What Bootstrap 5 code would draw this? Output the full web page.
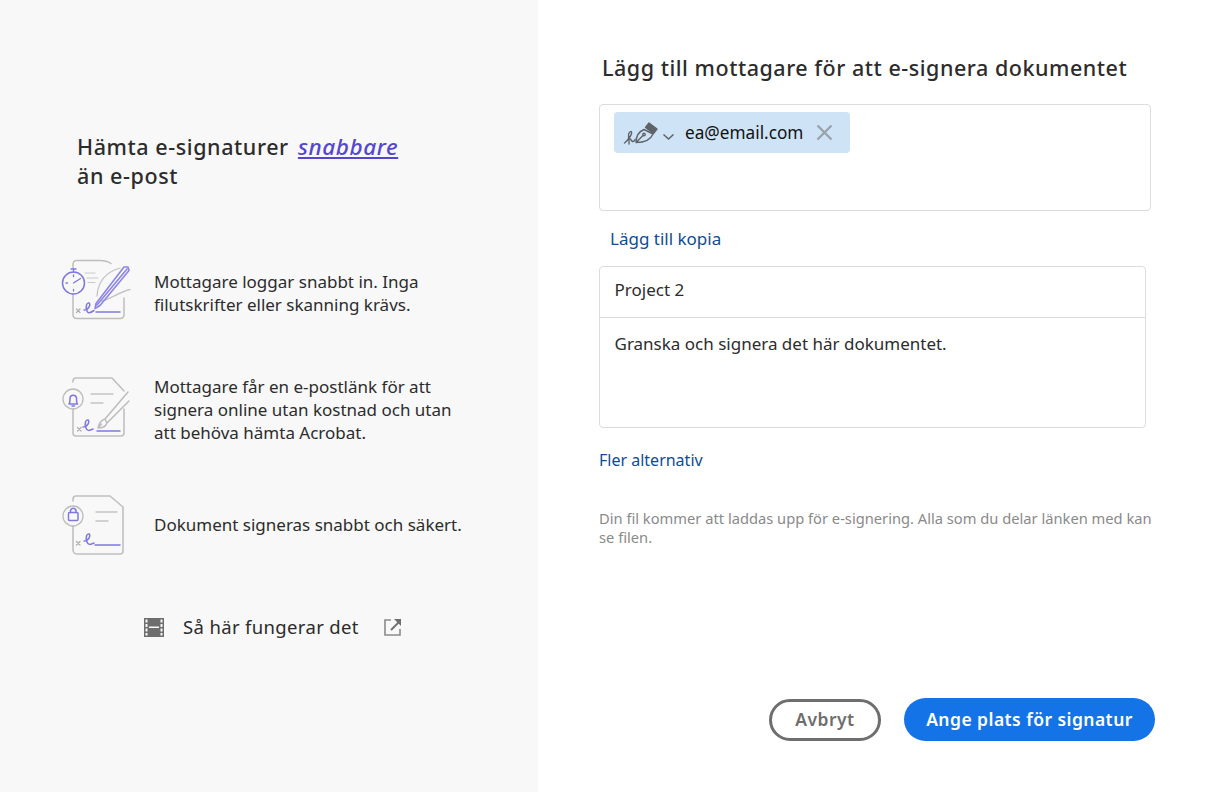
<!DOCTYPE html>
<html lang="sv">
<head>
<meta charset="utf-8">
<title>Lägg till mottagare</title>
<link href="https://cdn.jsdelivr.net/npm/bootstrap@5.3.0/dist/css/bootstrap.min.css" rel="stylesheet">
<style>
html,body{height:100%;}
body{font-family:"Noto Sans","Open Sans",sans-serif;color:#2c2c2c;background:#fff;overflow:hidden;}
.shell{height:792px;}
.side{width:538px;flex:none;background:#f8f8f8;padding:132px 0 0 0;}
.side-title{margin:0 0 0 77px;font-size:21.5px;line-height:29px;font-weight:500;letter-spacing:.58px;height:59px;}
.side-title em{color:#5546cf;text-decoration:underline;margin-left:3px;font-weight:500;font-size:22.5px;}
.feat{display:flex;align-items:center;margin-left:56px;}
.feat svg{flex:none;width:80px;height:72px;margin-right:18px;}
.feat p{margin:0;font-size:17px;line-height:23px;width:340px;color:#2c2c2c;}
.f1{margin-top:66px;}
.f2{margin-top:44px;}
.f3{margin-top:43px;}
.how{margin:53px 0 0 144px;font-size:18.5px;line-height:28px;letter-spacing:.35px;color:#2c2c2c;}
.how-ic{width:20px;height:19px;margin-right:19px;}
.how-ext{width:18px;height:18px;margin-left:25px;}
.main{flex:1;padding:53px 0 0 61px;position:relative;}
.main-title{font-size:21.5px;line-height:30px;font-weight:500;letter-spacing:.53px;margin:0 0 21px 3px;color:#2c2c2c;}
.rcpt{width:552px;height:107px;border:1px solid #dcdcdc;border-radius:4px;padding:7px 14px;}
.chip{width:236px;height:41px;background:#cfe3f6;border-radius:4px;padding:0 17px 0 9px;font-size:17.2px;color:#111;}
.chip-ic{width:40px;height:26px;flex:none;}
.chip-car{width:11px;height:6px;margin:8px 11px 0 0;flex:none;}
.chip-x{width:17px;height:17px;margin-left:auto;flex:none;}
.lnk{color:#0f4c93;text-decoration:none;line-height:24px;display:block;}
.add-cc{margin:16px 0 15px 11px;font-size:17px;}
.msg{width:547px;height:162px;border:1px solid #dcdcdc;border-radius:4px;font-size:17px;color:#2c2c2c;}
.msg-a{height:51px;padding:0 14.5px;line-height:46px;border-bottom:1px solid #dcdcdc;}
.msg-b{padding:14px 14.5px;line-height:24px;}
.more{margin:20px 0 0 0;font-size:16px;}
.note{width:556px;margin:37px 0 0 0;font-size:14.7px;line-height:19px;color:#8a8a8a;}
.acts{position:absolute;left:231px;top:698px;gap:23px;align-items:center;}
.pill{border-radius:22px;font-weight:600;font-size:17.5px;line-height:1;display:flex;align-items:center;justify-content:center;letter-spacing:.45px;padding:1px 0 0;}
.pill-o{width:112px;height:42px;border:3px solid #6e6e6e;color:#6e6e6e;background:#fff;}
.pill-p{width:251px;height:43px;border:0;background:#1473e6;color:#fff;}
.pill-o:hover{background:#fff;color:#6e6e6e;border-color:#6e6e6e;}
.pill-p:hover{background:#1473e6;color:#fff;}
</style>
</head>
<body>
<div class="d-flex shell">
  <aside class="side">
    <h1 class="side-title">Hämta e-signaturer <em>snabbare</em><br>än e-post</h1>

    <div class="feat f1">
      <svg viewBox="0 0 80 72" fill="none" stroke-linecap="round" stroke-linejoin="round">
        <path d="M17 11V7a3.500 3.500 0 0 1 3.500-3.500H44c4 0 8 1 11 3M17 37v21a3.500 3.500 0 0 0 3.500 3.500h44a3.500 3.500 0 0 0 3.500-3.500V41" stroke="#bdbdbd" stroke-width="1.500"/>
        <path d="M29 16h10M31 21h11M32 25.500h7" stroke="#c9c9c9" stroke-width="1.200"/>
        <path d="M41 39c1-14 9-24 23-28M45 44c8-1 18-9 29-11.500" stroke="#c4c4c4" stroke-width="1.300"/>
        <circle cx="17.500" cy="26" r="11" stroke="#7f78e0" stroke-width="1.500"/>
        <path d="M17.500 15v-2.500M15 12h5M17.500 26l7-4.500M17.500 18v1.500M17.500 32.500V34M10 26h1.500" stroke="#7f78e0" stroke-width="1.300"/>
        <path d="M39 51.500l1-5L68 10l4 0 1 3.500-29 35zM71 12L41 48" stroke="#8d86e6" stroke-width="1.600"/>
        <path d="M20.500 52l3.500 3.500m0-3.500l-3.500 3.500" stroke="#adadad" stroke-width="1.200"/>
        <path d="M28 53c5 0 7-6 5-7-2-.5-4 3-2 8 1 3 3 2 7-.5M40 55h24" stroke="#7f78e0" stroke-width="1.500"/>
      </svg>
      <p>Mottagare loggar snabbt in. Inga<br>filutskrifter eller skanning krävs.</p>
    </div>

    <div class="feat f2">
      <svg viewBox="0 0 80 72" fill="none" stroke-linecap="round" stroke-linejoin="round">
        <path d="M17 9V8a3 3 0 0 1 3-3h36l12 13M68 36v24a3 3 0 0 1-3 3H20a3 3 0 0 1-3-3V36" stroke="#c0c0c0" stroke-width="1.600"/>
        <circle cx="17" cy="26" r="10" stroke="#bcbcbc" stroke-width="1.300"/>
        <path d="M13 31c1-1 1-2 1-5.500a3.200 3.200 0 0 1 6.500 0c0 3.500 0 4.500 1 5.500zM16 33h2.500" stroke="#7f78e0" stroke-width="1.500"/>
        <path d="M35 21h22M35 30h12" stroke="#c4c4c4" stroke-width="1.300"/>
        <path d="M72 19L49 46M73 28L51 50M49 46c-4 1-6 4-7 9 5 0 8-2 9-5zM42 55l3.500-4" stroke="#bcbcbc" stroke-width="1.500"/>
        <path d="M21.500 54.500l3.500 3.500m0-3.500L21.500 58" stroke="#adadad" stroke-width="1.200"/>
        <path d="M27 54c5 0 7-6 5-7-2-.5-4 3-2 8 1 3 3 3 7 1M41 58h23" stroke="#7f78e0" stroke-width="1.500"/>
      </svg>
      <p>Mottagare får en e-postlänk för att<br>signera online utan kostnad och utan<br>att behöva hämta Acrobat.</p>
    </div>

    <div class="feat f3">
      <svg viewBox="0 0 80 72" fill="none" stroke-linecap="round" stroke-linejoin="round">
        <path d="M17 13v-2a3 3 0 0 1 3-3h34l13 11v44a3 3 0 0 1-3 3H21a4 4 0 0 1-4-4V38" stroke="#c0c0c0" stroke-width="1.600"/>
        <circle cx="17" cy="28" r="10" stroke="#bcbcbc" stroke-width="1.300"/>
        <rect x="12.500" y="24.500" width="9.500" height="8" rx="1" stroke="#7f78e0" stroke-width="1.500"/>
        <path d="M14.500 24.500v-2a2.800 2.800 0 0 1 5.500 0v2" stroke="#7f78e0" stroke-width="1.500"/>
        <path d="M40 24h21M40 33h12" stroke="#c4c4c4" stroke-width="1.300"/>
        <path d="M20.500 53.500l3.500 3.500m0-3.500L20.500 57" stroke="#adadad" stroke-width="1.200"/>
        <path d="M28 53c5 0 7-6 5-7-2-.5-4 3-2 8 1 3 3 3 7 1M39 57h25" stroke="#7f78e0" stroke-width="1.500"/>
      </svg>
      <p>Dokument signeras snabbt och säkert.</p>
    </div>

    <div class="how d-flex align-items-center">
      <svg class="how-ic" viewBox="0 0 20 19"><path fill="#6e6e6e" fill-rule="evenodd" d="M0 0h20v19H0zM1.500 1.500v3h2v-3zM1.500 6v3h2V6zM1.500 10.500v3h2v-3zM1.500 15v2.500h2V15zM16.500 1.500v3h2v-3zM16.500 6v3h2V6zM16.500 10.500v3h2v-3zM16.500 15v2.500h2V15zM5 8.500V10h10V8.500z"/></svg>
      <span>Så här fungerar det</span>
      <svg class="how-ext" viewBox="0 0 18 18" fill="none"><path d="M7 2H1v15h15v-6" stroke="#8a8a8a" stroke-width="1.600"/><path d="M7 12l9-9" stroke="#6e6e6e" stroke-width="1.800"/><path fill="#6e6e6e" d="M10 1h7v7z"/></svg>
    </div>
  </aside>

  <main class="main">
    <h2 class="main-title">Lägg till mottagare för att e-signera dokumentet</h2>
    <div class="rcpt">
      <div class="chip d-flex align-items-center">
        <svg class="chip-ic" viewBox="0 0 40 26" fill="none" stroke="#5f6368" stroke-width="1.400" stroke-linecap="round" stroke-linejoin="round">
          <path d="M1.500 23c3-2 8-9 7-11-1-1.500-3.500 1-3 5 .5 3 1 5 .5 7M5.500 18c2 0 3 3 4 3.500 1.500.5 2-1 2.500-2"/>
          <path d="M13 22.500C13 17 15 12 21 9.500l9 4.500c-2 5-8 8.500-17 8.500zM13 22.500l7-7"/>
          <circle cx="21" cy="14.500" r="1.200"/>
          <path fill="#5f6368" d="M22.500 7.500L26 3l8 6-3.500 4.500z"/>
        </svg>
        <svg class="chip-car" viewBox="0 0 11 6" fill="none" stroke="#5f6368" stroke-width="1.500"><path d="M.5.500l5 4.500 5-4.500"/></svg>
        <span>ea@email.com</span>
        <svg class="chip-x" viewBox="0 0 17 17" fill="none" stroke="#9aa3ab" stroke-width="2.400"><path d="M1.500 1.500l14 14M15.500 1.500l-14 14"/></svg>
      </div>
    </div>
    <a href="#" class="lnk add-cc">Lägg till kopia</a>
    <div class="msg">
      <div class="msg-a">Project 2</div>
      <div class="msg-b">Granska och signera det här dokumentet.</div>
    </div>
    <a href="#" class="lnk more">Fler alternativ</a>
    <p class="note">Din fil kommer att laddas upp för e-signering. Alla som du delar länken med kan se filen.</p>
    <div class="acts position-absolute d-flex">
      <button type="button" class="btn pill pill-o">Avbryt</button>
      <button type="button" class="btn pill pill-p">Ange plats för signatur</button>
    </div>
  </main>
</div>
<script src="https://cdn.jsdelivr.net/npm/bootstrap@5.3.0/dist/js/bootstrap.bundle.min.js"></script>
</body>
</html>
